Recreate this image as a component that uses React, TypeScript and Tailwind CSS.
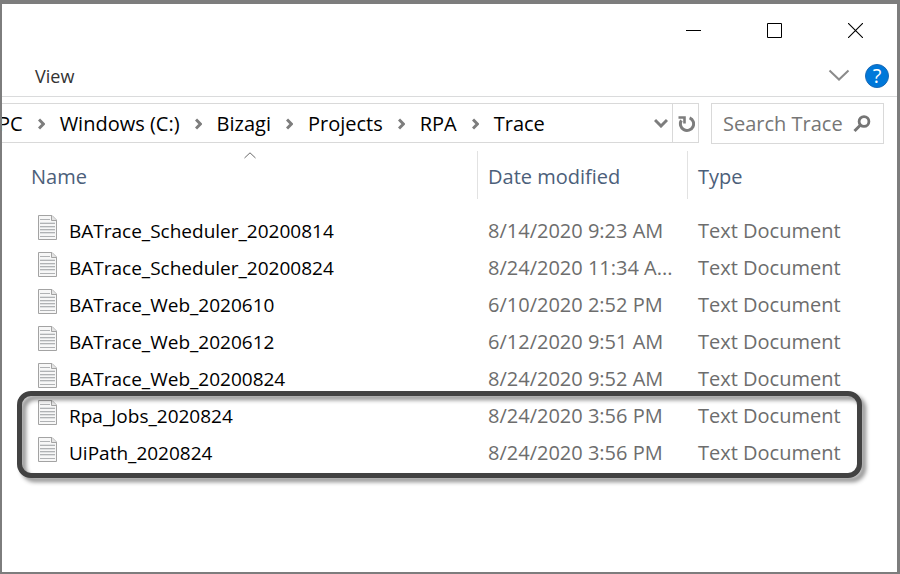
import { Fragment } from 'react';

const path = ['PC', 'Windows (C:)', 'Bizagi', 'Projects', 'RPA', 'Trace'];

const files = [
    { name: 'BATrace_Scheduler_20200814', date: '8/14/2020 9:23 AM' },
    { name: 'BATrace_Scheduler_20200824', date: '8/24/2020 11:34 A...' },
    { name: 'BATrace_Web_2020610', date: '6/10/2020 2:52 PM' },
    { name: 'BATrace_Web_2020612', date: '6/12/2020 9:51 AM' },
    { name: 'BATrace_Web_20200824', date: '8/24/2020 9:52 AM' },
    { name: 'Rpa_Jobs_2020824', date: '8/24/2020 3:56 PM' },
    { name: 'UiPath_2020824', date: '8/24/2020 3:56 PM' },
];

function FileIcon() {
    return (
        <svg width="20" height="32" viewBox="0 0 20 32" className="shrink-0" aria-hidden="true">
            <path d="M.5 .5H14L18.5 5V24.5H.5Z" fill="#f7f7f7" stroke="#a3a3a3" />
            <path d="M13.5 .5V5.5H18.5" fill="#e4e4e4" stroke="#a3a3a3" />
            <path d="M2 4.5H12M2 8.5H17M2 11.5H17M2 14.5H17M2 17.5H17M2 21.5H17" stroke="#b0b2b4" />
            <path d="M2 7.5H17M2 12.5H17M2 15.5H17M2 18.5H17" stroke="#dfe1e2" />
        </svg>
    );
}

function Crumb() {
    return (
        <svg width="7" height="12" viewBox="0 0 7 12" className="shrink-0" aria-hidden="true">
            <path d="M1 1.5L5.4 6L1 10.5" fill="none" stroke="#7d7d7d" strokeWidth="3" />
        </svg>
    );
}

export default function App() {
    return (
        <div className="flex min-h-screen flex-col overflow-hidden border-t-4 border-r-3 border-b-2 border-l-2 border-[#7d7d7d] bg-white font-['Open_Sans','Noto_Sans',sans-serif] text-[20px] leading-7 text-black">
            {/* Window controls */}
            <header className="flex h-[53px] justify-end pr-px">
                <button aria-label="Minimize" className="flex w-[81px] items-center justify-center">
                    <svg width="15" height="15" viewBox="0 0 15 15">
                        <path d="M0 7.5H15" stroke="#000" />
                    </svg>
                </button>
                <button aria-label="Maximize" className="flex w-[81px] items-center justify-center">
                    <svg width="15" height="15" viewBox="0 0 15 15">
                        <path d="M.5 .5H14.5V14.5H.5Z" fill="none" stroke="#000" />
                    </svg>
                </button>
                <button aria-label="Close" className="flex w-[81px] items-center justify-center">
                    <svg width="15" height="15" viewBox="0 0 15 15">
                        <path d="M0 0L15 15M15 0L0 15" stroke="#000" strokeWidth="1.1" />
                    </svg>
                </button>
            </header>

            {/* Ribbon tabs */}
            <div className="flex h-10 items-center border-b border-[#dadbdc] pr-2 pb-0.5 pl-[33px]">
                <button className="text-[18px] text-[#333]">View</button>
                <button aria-label="Expand the ribbon" className="ml-auto">
                    <svg width="22" height="13" viewBox="0 0 22 13">
                        <path d="M1.5 1.5L11 10.5L20.5 1.5" fill="none" stroke="#8b8b8b" strokeWidth="2" />
                    </svg>
                </button>
                <button
                    aria-label="Help"
                    className="ml-[15px] flex h-6 w-6 items-center justify-center rounded-full border border-[#1a69b5] bg-[#0078d9] text-[20px] text-white"
                >
                    ?
                </button>
            </div>

            {/* Address bar and search */}
            <div className="mt-[6px] flex items-start gap-3 pr-[13px]">
                <div className="flex h-10 min-w-0 flex-1 items-center border border-l-0 border-[#d9d9d9]">
                    <nav
                        aria-label="Address"
                        className="-ml-1 flex flex-1 items-center gap-[15px] pt-0.5 whitespace-nowrap"
                    >
                        {path.map((part, i) => (
                            <Fragment key={part}>
                                {i > 0 && <Crumb />}
                                <a href="#">{part}</a>
                            </Fragment>
                        ))}
                    </nav>
                    <button aria-label="Previous locations" className="mr-1">
                        <svg width="14" height="10" viewBox="0 0 14 10">
                            <path d="M1 2L7 8L13 2" fill="none" stroke="#7d7d7d" strokeWidth="3" />
                        </svg>
                    </button>
                    <button
                        aria-label="Refresh"
                        className="flex w-[26px] items-center justify-center self-stretch border-l border-[#d9d9d9] pt-0.5 pl-0.5"
                    >
                        <svg width="17" height="17" viewBox="0 0 17 17">
                            <path d="M11.6 1.8A6.6 6.6 0 1 1 3.4 4.4" fill="none" stroke="#7d7d7d" strokeWidth="3" />
                            <path d="M.5 1.5H6.5V7.5" fill="none" stroke="#7d7d7d" strokeWidth="2.6" />
                        </svg>
                    </button>
                </div>
                <label className="flex h-[41px] w-[173px] items-center border border-[#d9d9d9] pr-3 pl-[11px]">
                    <input
                        type="text"
                        aria-label="Search Trace"
                        placeholder="Search Trace"
                        className="min-w-0 flex-1 pt-px outline-none placeholder:text-[#767676]"
                    />
                    <svg width="18" height="18" viewBox="0 0 18 18" className="shrink-0" aria-hidden="true">
                        <circle cx="11" cy="6.5" r="4.9" fill="none" stroke="#757575" strokeWidth="2.8" />
                        <path d="M7.5 10L1.5 16" stroke="#757575" strokeWidth="3" />
                    </svg>
                </label>
            </div>

            {/* File list */}
            <main className="relative mt-[7px] pl-[19px]">
                <table className="w-full table-fixed text-left whitespace-nowrap">
                    <thead>
                        <tr className="h-[61px] align-top text-[#4c607a]">
                            <th className="relative w-[457px] font-normal">
                                <svg
                                    width="12"
                                    height="7"
                                    viewBox="0 0 12 7"
                                    className="absolute top-px left-1/2 -translate-x-1/2"
                                    aria-hidden="true"
                                >
                                    <path d="M.5 6L6 .8L11.5 6" fill="none" stroke="#6a6a6a" />
                                </svg>
                                <button className="flex h-12 w-full items-center border-r border-[#e2e2e2] pt-1 pl-[10px]">
                                    Name
                                </button>
                            </th>
                            <th className="w-[210px] font-normal">
                                <button className="flex h-12 w-full items-center border-r border-[#e2e2e2] pt-1 pl-[10px]">
                                    Date modified
                                </button>
                            </th>
                            <th className="font-normal">
                                <button className="flex h-12 w-full items-center pt-1 pl-[10px]">Type</button>
                            </th>
                        </tr>
                    </thead>
                    <tbody>
                        {files.map((file) => (
                            <tr key={file.name} className="h-[37px] text-[#6d6d6d]">
                                <td className="pl-[17px]">
                                    <div className="flex items-center gap-[11px] text-[19px] text-black">
                                        <FileIcon />
                                        {file.name}
                                    </div>
                                </td>
                                <td className="pl-[10px]">{file.date}</td>
                                <td className="pl-[10px]">Text Document</td>
                            </tr>
                        ))}
                    </tbody>
                </table>
                {/* Callout around the last two files */}
                <div className="pointer-events-none absolute right-[35px] -bottom-[7px] left-[15px] h-[87px] rounded-[14px] border-5 border-[#424242] drop-shadow-[4px_4px_2px_rgba(0,0,0,0.45)]" />
            </main>
        </div>
    );
}
